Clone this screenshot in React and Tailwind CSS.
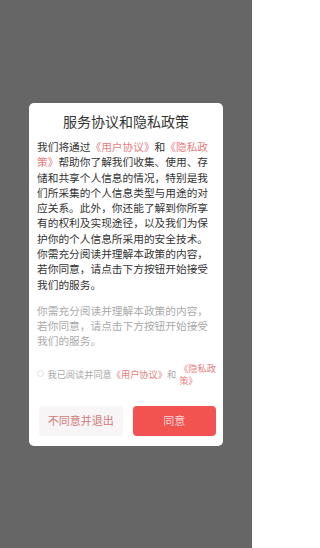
import React, { useState } from "react";

const font = { fontFamily: '"Noto Sans CJK SC", "Noto Sans", sans-serif' };

const Link = ({ children }) => <span className="text-[#e8807f]">{children}</span>;

export default function App() {
  const [agreed, setAgreed] = useState(false);

  return (
    <div className="w-[252px] h-[548px] bg-[#666666] pt-[103px]" style={font}>
      <div className="ml-[29px] w-[194px] bg-white rounded-[5px] pt-[8px] pb-[10px]">
        <h1 className="text-center text-[14px] leading-[20px] text-[#333333]">
          服务协议和隐私政策
        </h1>

        <div className="pl-[8px] pr-[8px] mt-[8px] text-[10.7px] leading-[15.3px]">
          <p className="text-[#333333]">
            我们将通过<Link>《用户协议》</Link>和<Link>《隐私政策》</Link>帮助你了解我们收集、使用、存储和共享个人信息的情况，特别是我们所采集的个人信息类型与用途的对应关系。此外，你还能了解到你所享有的权利及实现途径，以及我们为保护你的个人信息所采用的安全技术。你需充分阅读并理解本政策的内容，若你同意，请点击下方按钮开始接受我们的服务。
          </p>
          <p className="mt-[10.7px] text-[#aaaaaa]">
            你需充分阅读并理解本政策的内容，若你同意，请点击下方按钮开始接受我们的服务。
          </p>
        </div>

        <div className="mt-[13px] flex items-center pl-[7.5px] pr-[5px] text-[9.2px] leading-[12px]">
          <button
            onClick={() => setAgreed(!agreed)}
            className={`w-[7px] h-[7px] rounded-full border shrink-0 ${agreed ? "bg-[#f25351] border-[#f25351]" : "border-[#dddddd]"}`}
          />
          <span className="ml-[4px] shrink-0 whitespace-nowrap text-[#aaaaaa]">
            我已阅读并同意<Link>《用户协议》</Link>和
          </span>
          <span className="ml-[3px] w-[38px] text-[#e8807f]">《隐私政策》</span>
        </div>

        <div className="mt-[20px] flex gap-[10px] pl-[10px] pr-[7px]">
          <button className="flex-1 h-[30px] rounded-[4px] bg-[#f7f5f5] text-[#d07b7b] text-[11px]">
            不同意并退出
          </button>
          <button className="flex-1 h-[30px] rounded-[4px] bg-[#f25351] text-[#fbd6d6] text-[11px]">
            同意
          </button>
        </div>
      </div>
    </div>
  );
}
